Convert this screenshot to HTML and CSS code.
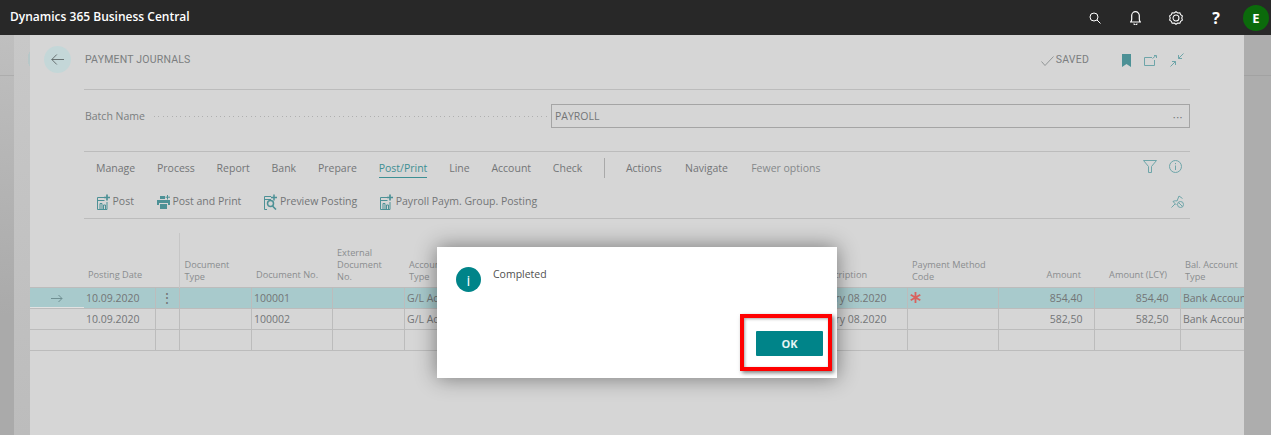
FILE: index.html
```html
<!DOCTYPE html>
<html lang="en">

<head>
	<meta charset="UTF-8" />
	<title>Payment Journals - Dynamics 365 Business Central</title>
	<link rel="stylesheet" href="styles.css">
</head>

<body>
	<svg class="defs" width="0" height="0">
		<symbol id="postIcon" viewBox="0 0 13 16">
			<path d="M7.500 3.500H.5v12h9.500V8M.5 6.500h7" fill="none" stroke="currentColor" />
			<path d="M3 15.500V9.500h2v6M6.500 15.500V11h2v4.500" fill="none" stroke="currentColor" />
			<path d="M10 .5v6M7 3.500h6" stroke="currentColor" stroke-width="1.700" />
		</symbol>
	</svg>

	<header class="topbar">
		<span class="productName">Dynamics 365 Business Central</span>
		<div class="topbarIcons">
			<svg class="searchIcon" width="12" height="12" viewBox="0 0 12 12" fill="none" stroke="#fff">
				<circle cx="5" cy="5" r="4" />
				<path d="M8 8l3.500 3.500" />
			</svg>
			<svg class="bellIcon" width="11" height="14" viewBox="0 0 11 14" fill="none" stroke="#fff" stroke-width="1.200">
				<path d="M.7 11h9.600c-.7-.8-1-1.700-1-3V4.500a3.800 3.800 0 0 0-7.600 0V8c0 1.300-.3 2.200-1 3z" />
				<path d="M4 12.500a1.500 1.500 0 0 0 3 0" />
			</svg>
			<svg class="gearIcon" width="14" height="14" viewBox="0 0 16 16" fill="none" stroke="#fff" stroke-width="1.200">
				<path d="M8 .8l2 1.400 2.400-.2.900 2.300 2 1.300-.7 2.400.7 2.400-2 1.300-.9 2.300-2.400-.2-2 1.400-2-1.400-2.400.2-.9-2.300-2-1.300.7-2.400-.7-2.400 2-1.300.9-2.300 2.400.2z" />
				<circle cx="8" cy="8" r="3.400" />
			</svg>
			<span class="helpIcon">?</span>
			<span class="avatar">E</span>
		</div>
	</header>

	<div class="stage">
		<div class="sideStrip outer"></div>
		<div class="sideStrip inner"></div>

		<main class="panel">
			<div class="titleRow">
				<button class="backButton">
					<svg width="13" height="11" viewBox="0 0 13 11" fill="none" stroke="#5e6667" stroke-width=".9">
						<path d="M13 5.500H.8M5.800.5L.8 5.500l5 5" />
					</svg>
				</button>
				<h1 class="pageTitle">PAYMENT JOURNALS</h1>
				<svg class="savedCheck" width="13" height="10" viewBox="0 0 13 10" fill="none" stroke="#8a8f90" stroke-width=".9">
					<path d="M.5 5.500l3.500 4L12.500.5" />
				</svg>
				<span class="savedLabel">SAVED</span>
				<svg class="bookmarkIcon" width="9" height="13" viewBox="0 0 9 13">
					<path d="M0 0h9v13L4.500 10 0 13z" fill="#4d9196" />
				</svg>
				<svg class="openIcon" width="13" height="11" viewBox="0 0 13 11" fill="none" stroke="#6ea5a9">
					<path d="M8 2.500H.5v8h10V5M8.500 3.500L12 .5M10 .5h2.500V3" />
				</svg>
				<svg class="collapseIcon" width="14" height="14" viewBox="0 0 14 14" fill="none" stroke="#6ea5a9">
					<path d="M13.500.5L8.500 5.500M8.500 2v3.500H12M.5 13.500l5-5M2 8.500h3.500V12" />
				</svg>
			</div>

			<div class="batchRow">
				<label class="batchLabel">Batch Name</label>
				<span class="leader"></span>
				<div class="batchInput">
					<span>PAYROLL</span>
					<span class="inputDots">···</span>
				</div>
			</div>

			<div class="ribbon">
				<nav class="tabs">
					<span>Manage</span>
					<span>Process</span>
					<span>Report</span>
					<span>Bank</span>
					<span>Prepare</span>
					<span class="active">Post/Print</span>
					<span>Line</span>
					<span>Account</span>
					<span>Check</span>
					<i class="tabSeparator"></i>
					<span>Actions</span>
					<span>Navigate</span>
					<span>Fewer options</span>
					<div class="ribbonIcons">
						<svg width="14" height="13" viewBox="0 0 14 13" fill="none" stroke="#6ea5a9">
							<path d="M.5.500h13L8.500 6.500v6h-3v-6z" />
						</svg>
						<svg width="13" height="13" viewBox="0 0 13 13" fill="none" stroke="#6ea5a9">
							<circle cx="6.500" cy="6.500" r="6" />
							<path d="M6.500 5.500v4.500M6.500 3v1.200" />
						</svg>
					</div>
				</nav>

				<div class="actions">
					<span class="action">
						<svg class="actionIcon" width="13" height="16"><use href="#postIcon" /></svg>Post
					</span>
					<span class="action">
						<svg class="actionIcon" width="13" height="14" viewBox="0 0 13 14">
							<path d="M3 1h5v3H3zM0 5h13v5h-2V8H2v2H0zM3 9h7v5H3z" fill="currentColor" />
							<path d="M10.500 0v4.500M8.500 2.200h4.500" stroke="currentColor" />
						</svg>Post and Print
					</span>
					<span class="action">
						<svg class="actionIcon" width="13" height="16" viewBox="0 0 13 16" fill="none" stroke="currentColor">
							<path d="M7 2.500H.5v13H3M.5 5.500H7" />
							<circle cx="6.500" cy="9.500" r="3" stroke-width="1.500" />
							<path d="M8.500 12l3.500 3.500" stroke-width="1.600" />
							<path d="M10 .5v6M7 3.500h6" stroke-width="1.500" />
						</svg>Preview Posting
					</span>
					<span class="action">
						<svg class="actionIcon" width="13" height="16"><use href="#postIcon" /></svg>Payroll Paym. Group. Posting
					</span>
					<svg class="pinIcon" width="13" height="13" viewBox="0 0 13 13" fill="none" stroke="#6ea5a9">
						<path d="M.5 12.500L4 9M2 6.500c1.500-.8 3-.9 4-.5L8 1l3.500 2.500M2 6.500l3.500 3.500" />
						<circle cx="9.500" cy="9.500" r="3" />
						<path d="M7.500 7.500l4 4" />
					</svg>
				</div>
			</div>

			<table class="journal">
				<colgroup>
					<col class="colDate">
					<col class="colMenu">
					<col class="colType">
					<col class="colNo">
					<col class="colExt">
					<col class="colAccType">
					<col class="colAccNo">
					<col class="colDesc">
					<col class="colMethod">
					<col class="colAmount">
					<col class="colLcy">
					<col class="colBal">
				</colgroup>
				<thead>
					<tr>
						<th class="firstCol single">Posting Date</th>
						<th></th>
						<th class="ruled">Document<br>Type</th>
						<th class="single">Document No.</th>
						<th>External<br>Document<br>No.</th>
						<th>Account<br>Type</th>
						<th></th>
						<th class="single descHead">Description</th>
						<th>Payment Method<br>Code</th>
						<th class="num single">Amount</th>
						<th class="num single">Amount (LCY)</th>
						<th>Bal. Account<br>Type</th>
					</tr>
				</thead>
				<tbody>
					<tr class="selected">
						<td class="firstCol">
							<svg class="rowArrow" width="12" height="9" viewBox="0 0 12 9" fill="none" stroke="#6f8f92">
								<path d="M0 4.500h11M7.500 1L11 4.500 7.500 8" />
							</svg>10.09.2020
						</td>
						<td class="rowMenu">⋮</td>
						<td></td>
						<td>100001</td>
						<td></td>
						<td>G/L Account</td>
						<td></td>
						<td>January 08.2020</td>
						<td class="required">
							<svg width="11" height="11" viewBox="0 0 11 11" stroke="#d9625e" stroke-width="1.800">
								<path d="M5.500 0v11M.7 2.700l9.600 5.600M10.300 2.700L.7 8.300" />
							</svg>
						</td>
						<td class="num">854,40</td>
						<td class="num">854,40</td>
						<td>Bank Account</td>
					</tr>
					<tr>
						<td class="firstCol">10.09.2020</td>
						<td></td>
						<td></td>
						<td>100002</td>
						<td></td>
						<td>G/L Account</td>
						<td></td>
						<td>January 08.2020</td>
						<td></td>
						<td class="num">582,50</td>
						<td class="num">582,50</td>
						<td>Bank Account</td>
					</tr>
					<tr>
						<td class="firstCol"></td>
						<td></td>
						<td></td>
						<td></td>
						<td></td>
						<td></td>
						<td></td>
						<td></td>
						<td></td>
						<td></td>
						<td></td>
						<td></td>
					</tr>
				</tbody>
			</table>
		</main>

		<div class="sideStrip right"></div>
	</div>

	<section class="dialog">
		<div class="dialogBody">
			<span class="infoBadge">i</span>
			<p class="dialogText">Completed</p>
		</div>
		<div class="dialogFooter">
			<button class="okButton">OK</button>
		</div>
	</section>
	<div class="redMark"></div>
</body>

</html>
```

FILE: styles.css
```css
* {
	box-sizing: border-box;
}

html,
body {
	height: 100%;
}

body {
	margin: 0;
	position: relative;
	display: flex;
	flex-direction: column;
	overflow: hidden;
	font-family: "Open Sans", "Noto Sans", sans-serif;
	font-size: 10.5px;
	color: #737576;
	background: #b0b0b0;
}

.defs {
	position: absolute;
}

.topbar {
	flex: none;
	height: 35px;
	display: flex;
	align-items: center;
	padding-left: 10px;
	background: #282828;
	color: white;
}

.productName {
	font-size: 12px;
	font-weight: 600;
	position: relative;
	top: -1px;
}

.topbarIcons {
	margin-left: auto;
	display: flex;
	align-items: center;
	padding-right: 2px;
}

.searchIcon {
	margin-right: 29px;
}

.bellIcon {
	margin-right: 28px;
}

.gearIcon {
	margin-right: 29px;
}

.helpIcon {
	font-size: 16px;
	font-weight: 700;
	margin-right: 23px;
}

.avatar {
	width: 26px;
	height: 26px;
	border-radius: 50%;
	background: #0b6a0b;
	font-size: 13px;
	font-weight: 700;
	display: flex;
	align-items: center;
	justify-content: center;
}

.stage {
	flex: 1;
	display: flex;
	min-height: 0;
}

.sideStrip {
	flex: none;
}

.sideStrip.outer {
	width: 14px;
	background:
		linear-gradient(#adadad, #adadad) 0 40px / 100% 1px no-repeat,
		linear-gradient(180deg, #bfbfbf, #aaaaaa 70%);
}

.sideStrip.inner {
	width: 16px;
	background:
		radial-gradient(circle 13.5px at 27px 24px, #b7c7c8 99%, transparent) no-repeat,
		linear-gradient(180deg, #c8c8c8, #bcbcbc);
}

.sideStrip.right {
	flex: 1;
	background:
		linear-gradient(#a2a2a2, #a2a2a2) 0 40px / 100% 1px no-repeat,
		#adadad;
}

.panel {
	flex: none;
	width: 1214px;
	overflow: hidden;
	background: #d6d6d6;
}

.titleRow {
	height: 55px;
	margin: 0 54px;
	padding-top: 11px;
	display: flex;
	align-items: flex-start;
	border-bottom: 1px solid #bcbcbc;
	position: relative;
}

.backButton {
	position: absolute;
	left: -40px;
	top: 11px;
	width: 27px;
	height: 27px;
	padding: 0;
	border: 0;
	border-radius: 50%;
	background: #c4d7d8;
	display: flex;
	align-items: center;
	justify-content: center;
}

.pageTitle {
	margin: 0;
	padding-left: 1px;
	font-family: "Roboto", sans-serif;
	font-size: 10.5px;
	font-weight: 400;
	letter-spacing: .2px;
	line-height: 27px;
	color: #7b7e80;
}

.savedCheck {
	margin: 10px 2px 0 auto;
}

.savedLabel {
	font-family: "Roboto", sans-serif;
	letter-spacing: .2px;
	line-height: 27px;
	color: #7b7e80;
}

.bookmarkIcon {
	margin: 8px 0 0 33px;
}

.openIcon {
	margin: 9px 0 0 13px;
}

.collapseIcon {
	margin: 7px 6px 0 13px;
}

.batchRow {
	height: 62px;
	margin: 0 54px;
	padding-top: 14px;
	display: flex;
	align-items: flex-start;
	border-bottom: 1px solid #bcbcbc;
}

.batchLabel {
	line-height: 24px;
	padding-left: 1px;
	color: #7b7e80;
}

.leader {
	flex: 1;
	height: 1px;
	margin: 12px 3px 0 9px;
	background: repeating-linear-gradient(90deg, #b0b0b0 0 1px, transparent 1px 4.400px);
}

.batchInput {
	width: 639px;
	height: 24px;
	padding: 0 6px 0 3px;
	display: flex;
	align-items: center;
	justify-content: space-between;
	border: 1px solid #a5a5a5;
}

.inputDots {
	font-size: 11px;
	letter-spacing: .5px;
}

.ribbon {
	margin: 0 54px;
	height: 67px;
	border-bottom: 1px solid #bcbcbc;
}

.tabs {
	height: 33px;
	padding: 8px 0 0 12px;
	display: flex;
	align-items: flex-start;
	gap: 21.800px;
}

.tabs span {
	line-height: 17px;
	height: 17px;
}

.tabs .active {
	color: #3d8f93;
	border-bottom: 1px solid #3d8f93;
	height: 18px;
}

.tabSeparator {
	width: 1px;
	height: 20px;
	margin: -2px -1px 0 0;
	background: #a9a9a9;
}

.tabSeparator~span+span {
	margin-left: 1.500px;
}

.tabs span:last-of-type {
	color: #85888a;
}

.ribbonIcons {
	margin-left: auto;
	display: flex;
	align-items: center;
	gap: 12px;
	padding-right: 8px;
}

.actions {
	padding: 7px 6px 0 13px;
	display: flex;
	align-items: center;
	gap: 23px;
}

.action {
	display: flex;
	align-items: center;
	gap: 2.500px;
	line-height: 19px;
}

.actionIcon {
	color: #4d9196;
}

.pinIcon {
	margin-left: auto;
}

.journal {
	table-layout: fixed;
	border-collapse: collapse;
	width: 1250px;
	margin-top: 14px;
}

.colDate {
	width: 125px;
}

.colMenu {
	width: 24px;
}

.colType {
	width: 72px;
}

.colNo {
	width: 81px;
}

.colExt {
	width: 72px;
}

.colAccType {
	width: 116px;
}

.colAccNo {
	width: 285px;
}

.colDesc {
	width: 102px;
}

.colMethod {
	width: 91px;
}

.colAmount {
	width: 96px;
}

.colLcy {
	width: 86px;
}

.colBal {
	width: 100px;
}

.journal th {
	height: 54px;
	padding: 0 0 4px 5px;
	vertical-align: bottom;
	text-align: left;
	font-size: 9.200px;
	font-weight: 400;
	line-height: 12px;
	color: #8a8d8f;
}

.journal th.single {
	padding-bottom: 6px;
}

.journal th.descHead {
	padding-left: 13px;
}

.journal thead tr {
	border-bottom: 1px solid #bcbcbc;
}

.journal th.ruled {
	border-left: 1px solid #c6c6c6;
}

.journal td {
	height: 21px;
	padding: 0 3px 0 2.500px;
	white-space: nowrap;
	overflow: hidden;
	border: 1px solid #bcbcbc;
}

.journal .num {
	text-align: right;
	padding-right: 11px;
}

.journal th.num {
	padding-right: 13px;
}

.journal .firstCol {
	padding-left: 56px;
	border-left: 0;
	position: relative;
}

.journal th.firstCol {
	padding-left: 58px;
}

.rowArrow {
	position: absolute;
	left: 21px;
	top: 6px;
}

.selected td {
	background: #a8cacc;
}

.selected .firstCol::after {
	content: "";
	position: absolute;
	left: 0;
	bottom: 0;
	width: 54px;
	height: 1px;
	background: #e2e2e2;
}

.rowMenu {
	text-align: center;
	font-size: 14px;
	line-height: 14px;
}

.required {
	line-height: 0;
}

.required svg {
	vertical-align: middle;
}

/* dialog and the red mark sit over the page */
.dialog {
	position: absolute;
	left: 437px;
	top: 247px;
	width: 400px;
	height: 131px;
	padding: 20px 14px 22px 19px;
	display: flex;
	flex-direction: column;
	justify-content: space-between;
	background: white;
	box-shadow: 0 0 20px rgb(0 0 0 / .45);
}

.dialogBody {
	display: flex;
	align-items: flex-start;
	gap: 12px;
}

.infoBadge {
	width: 25px;
	height: 25px;
	border-radius: 50%;
	background: #008489;
	color: white;
	font-size: 15px;
	display: flex;
	align-items: center;
	justify-content: center;
}

.dialogText {
	margin: 0;
	font-size: 10.500px;
	line-height: 14px;
	color: #505050;
}

.dialogFooter {
	display: flex;
	justify-content: flex-end;
}

.okButton {
	width: 67px;
	height: 25px;
	padding: 0;
	border: 0;
	border-radius: 1px;
	background: #008489;
	color: #e6f4f4;
	font-family: inherit;
	font-size: 11px;
	font-weight: 700;
}

.redMark {
	position: absolute;
	left: 740px;
	top: 314px;
	width: 92px;
	height: 57px;
	border: 4px solid #f00;
	box-shadow: 2px 2px 4px rgb(0 0 0 / .5), inset 1px 1px 3px rgb(0 0 0 / .35);
}
```
